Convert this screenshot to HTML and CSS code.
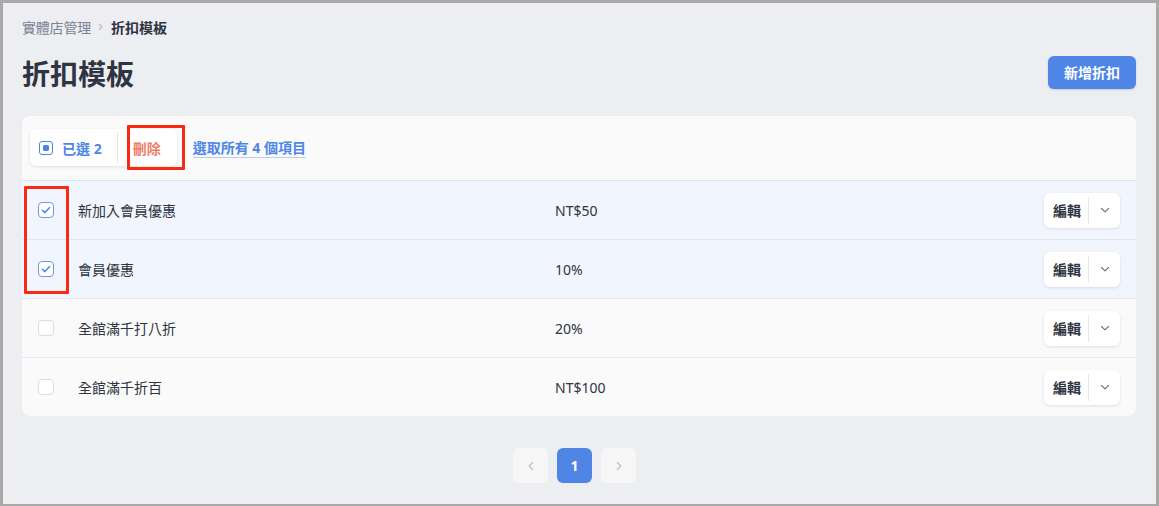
FILE: index.html
```html
<!DOCTYPE html>
<html lang="zh-Hant">
<head>
<meta charset="utf-8">
<title>折扣模板</title>
<link rel="stylesheet" href="styles.css">
</head>
<body>
<div class="frame">
  <nav class="crumbs">
    <span class="crumb">實體店管理</span>
    <svg class="crumb-sep" viewBox="0 0 8 8" width="8" height="8"><path d="M2.5 1.5 L5 4 L2.5 6.5" fill="none" stroke="#b4b9c4" stroke-width="1.2" stroke-linecap="round" stroke-linejoin="round"/></svg>
    <span class="crumb current">折扣模板</span>
  </nav>
  <header class="page-head">
    <h1 class="title">折扣模板</h1>
    <button class="btn-primary">新增折扣</button>
  </header>

  <section class="card">
    <div class="toolbar">
      <div class="bulk">
        <span class="bulk-sel">
          <span class="cb cb-indet"><span class="dot"></span></span>
          <span class="bulk-count">已選 2</span>
        </span>
        <span class="bulk-del">刪除</span>
      </div>
      <a class="select-all">選取所有 4 個項目</a>
    </div>

    <div class="row selected">
      <span class="cb cb-checked"><svg viewBox="0 0 16 16" width="16" height="16"><path d="M4.3 8.2 L6.9 10.6 L11.6 5.6" fill="none" stroke="#4f86e6" stroke-width="1.5" stroke-linecap="round" stroke-linejoin="round"/></svg></span>
      <span class="name">新加入會員優惠</span>
      <span class="value">NT$50</span>
      <span class="actions"><span class="act-edit">編輯</span><span class="act-more"><svg viewBox="0 0 12 12" width="12" height="12"><path d="M2.5 4.5 L6 7.8 L9.5 4.5" fill="none" stroke="#6a7182" stroke-width="1.1" stroke-linecap="round" stroke-linejoin="round"/></svg></span></span>
    </div>
    <div class="row selected">
      <span class="cb cb-checked"><svg viewBox="0 0 16 16" width="16" height="16"><path d="M4.3 8.2 L6.9 10.6 L11.6 5.6" fill="none" stroke="#4f86e6" stroke-width="1.5" stroke-linecap="round" stroke-linejoin="round"/></svg></span>
      <span class="name">會員優惠</span>
      <span class="value">10%</span>
      <span class="actions"><span class="act-edit">編輯</span><span class="act-more"><svg viewBox="0 0 12 12" width="12" height="12"><path d="M2.5 4.5 L6 7.8 L9.5 4.5" fill="none" stroke="#6a7182" stroke-width="1.1" stroke-linecap="round" stroke-linejoin="round"/></svg></span></span>
    </div>
    <div class="row">
      <span class="cb"></span>
      <span class="name">全館滿千打八折</span>
      <span class="value">20%</span>
      <span class="actions"><span class="act-edit">編輯</span><span class="act-more"><svg viewBox="0 0 12 12" width="12" height="12"><path d="M2.5 4.5 L6 7.8 L9.5 4.5" fill="none" stroke="#6a7182" stroke-width="1.1" stroke-linecap="round" stroke-linejoin="round"/></svg></span></span>
    </div>
    <div class="row last">
      <span class="cb"></span>
      <span class="name">全館滿千折百</span>
      <span class="value">NT$100</span>
      <span class="actions"><span class="act-edit">編輯</span><span class="act-more"><svg viewBox="0 0 12 12" width="12" height="12"><path d="M2.5 4.5 L6 7.8 L9.5 4.5" fill="none" stroke="#6a7182" stroke-width="1.1" stroke-linecap="round" stroke-linejoin="round"/></svg></span></span>
    </div>
  </section>

  <nav class="pager">
    <span class="pg pg-nav"><svg viewBox="0 0 12 12" width="12" height="12"><path d="M7.5 2.5 L4.2 6 L7.5 9.5" fill="none" stroke="#b9bec9" stroke-width="1.2" stroke-linecap="round" stroke-linejoin="round"/></svg></span>
    <span class="pg pg-cur">1</span>
    <span class="pg pg-nav"><svg viewBox="0 0 12 12" width="12" height="12"><path d="M4.5 2.5 L7.8 6 L4.5 9.5" fill="none" stroke="#b9bec9" stroke-width="1.2" stroke-linecap="round" stroke-linejoin="round"/></svg></span>
  </nav>

  <div class="mark mark-del"></div>
  <div class="mark mark-cb"></div>
</div>
</body>
</html>
```

FILE: styles.css
```css
* { box-sizing: border-box; }
html, body { margin: 0; padding: 0; }
body {
  font-family: "Noto Sans", "Noto Sans CJK TC", sans-serif;
  color: #2e3441;
  background: #a9a9a9;
}
.frame {
  position: relative;
  width: 1159px;
  height: 506px;
  border-style: solid;
  border-color: #a9a9a9;
  border-width: 3px 3px 2px 3px;
  background: #edeef1;
  padding: 14px 20px 0 19px;
  overflow: hidden;
}
.crumbs {
  display: flex;
  align-items: center;
  gap: 6px;
  height: 20px;
  font-size: 14px;
}
.crumb { color: #7b8394; letter-spacing: -0.2px; }
.crumb.current { color: #2e3441; font-weight: 600; letter-spacing: 0; }
.crumb-sep { margin-right: 0; }

.page-head {
  display: flex;
  align-items: center;
  justify-content: space-between;
  height: 40px;
  margin-top: 15px;
}
.title {
  margin: 0;
  font-size: 28px;
  font-weight: 700;
  line-height: 40px;
  margin-top: 3px;
  color: #2e3441;
}
.btn-primary {
  font-family: inherit;
  font-size: 14px;
  font-weight: 700;
  color: #fff;
  background: #4f86e6;
  border: none;
  border-radius: 6px;
  width: 88px;
  height: 33px;
  padding: 0;
  box-shadow: 0 1px 2px rgba(40, 60, 110, .2);
}

.card {
  margin-top: 24px;
  background: #fafafa;
  border-radius: 8px;
  overflow: hidden;
}
.toolbar {
  height: 65px;
  display: flex;
  align-items: center;
  padding: 0 8px;
  border-bottom: 1px solid #dbe3f0;
  gap: 16px;
}
.bulk {
  display: flex;
  align-items: center;
  height: 37px;
  margin-top: -1px;
  background: #fff;
  border-radius: 6px;
  box-shadow: 0 1px 3px rgba(30, 40, 70, .12);
}
.bulk-sel {
  display: flex;
  align-items: center;
  gap: 9px;
  padding: 0 16px 0 9px;
  height: 100%;
  position: relative;
}
.bulk-sel::after {
  content: "";
  position: absolute;
  right: 0;
  top: 3px;
  bottom: 3px;
  width: 1px;
  background: #e3e6ec;
}
.bulk-count {
  color: #4f86e6;
  font-weight: 700;
  font-size: 14px;
}
.bulk-del {
  color: #ec7d68;
  font-weight: 600;
  font-size: 14px;
  padding: 0 16px 0 15px;
}
.select-all {
  color: #4f86e6;
  font-weight: 700;
  font-size: 14px;
  border-bottom: 1px solid #b7cdf3;
  line-height: 19px;
}

.cb {
  width: 16px;
  height: 16px;
  border: 1px solid #d7dde6;
  border-radius: 4px;
  background: #fff;
  display: inline-flex;
  align-items: center;
  justify-content: center;
  flex: none;
}
.cb-indet {
  width: 14px;
  height: 14px;
  border: 1.5px solid #4f86e6;
  border-radius: 3px;
}
.cb-indet .dot {
  width: 6px;
  height: 6px;
  border-radius: 1.5px;
  background: #4f86e6;
}
.cb-checked {
  border-color: #6b98ea;
  background: #fff;
}
.cb-checked svg { display: block; margin: -1px; }

.row {
  display: grid;
  grid-template-columns: 40px 477px 1fr auto;
  align-items: center;
  height: 59px;
  padding: 0 16px;
  border-bottom: 1px solid #e4e7ec;
  font-size: 14px;
  color: #2e3441;
}
.row.selected { background: #f1f6fe; }
.row.last { border-bottom: none; height: 58px; }

.actions {
  display: flex;
  align-items: center;
  height: 35px;
  background: #fff;
  border-radius: 6px;
  box-shadow: 0 1px 3px rgba(30, 40, 70, .13);
}
.act-edit {
  font-weight: 700;
  font-size: 14px;
  padding: 0 7px 0 9px;
  display: flex;
  align-items: center;
  border-right: 1px solid #e4e7ec;
  height: 27px;
}
.act-more {
  width: 31px;
  display: flex;
  align-items: center;
  justify-content: center;
}

.pager {
  display: flex;
  justify-content: center;
  gap: 9px;
  margin-top: 32px;
  padding-right: 9px;
}
.pg {
  width: 35px;
  height: 35px;
  border-radius: 6px;
  display: flex;
  align-items: center;
  justify-content: center;
}
.pg-nav { background: #f6f6f7; }
.pg-cur {
  background: #4f86e6;
  color: #fff;
  font-weight: 700;
  font-size: 14px;
}

.mark {
  position: absolute;
  border: 3px solid #fa2a12;
  border-radius: 1px;
}
.mark-del { left: 124px; top: 122px; width: 58px; height: 45px; }
.mark-cb { left: 21px; top: 183px; width: 45px; height: 108px; }
```
